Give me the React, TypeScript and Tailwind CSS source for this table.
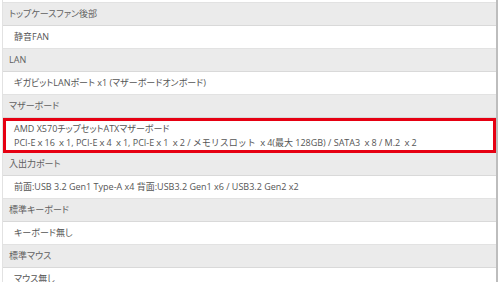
type Spec = { label: string; lines: string[]; highlight?: boolean };

const specs: Spec[] = [
  { label: 'トップケースファン後部', lines: ['静音FAN'] },
  { label: 'LAN', lines: ['ギガビットLANポート x1 (マザーボードオンボード)'] },
  {
    label: 'マザーボード',
    lines: [
      'AMD X570チップセットATXマザーボード',
      'PCI-Eｘ16 ｘ1, PCI-Eｘ4 ｘ1, PCI-Eｘ1 ｘ2 / メモリスロット ｘ4(最大 128GB) / SATA3 ｘ8 / M.2 ｘ2',
    ],
    highlight: true,
  },
  { label: '入出力ポート', lines: ['前面:USB 3.2 Gen1 Type-A x4 背面:USB3.2 Gen1 x6 / USB3.2 Gen2 x2'] },
  { label: '標準キーボード', lines: ['キーボード無し'] },
  { label: '標準マウス', lines: ['マウス無し'] },
];

function SpecRow({ spec }: { spec: Spec }) {
  return (
    <>
      <div className="h-[23px] flex items-center pl-[6px] bg-[#ebebeb] border-b border-[#d9d9d9] text-[9px] text-[#606060]">
        {spec.label}
      </div>
      {spec.highlight ? (
        <div className="h-[35px] border-[3px] border-[#e60012] flex flex-col justify-center pl-[8px] text-[9px] leading-[14px] text-[#555] bg-white">
          <div className="whitespace-nowrap">{spec.lines[0]}</div>
          {/* full-width ｘ keeps its cell here */}
          <div className="whitespace-nowrap [font-feature-settings:normal]">{spec.lines[1]}</div>
        </div>
      ) : (
        <div className="h-[23px] flex items-center pl-[11px] bg-white border-b border-[#e2e2e2] text-[9px] text-[#555]">
          {spec.lines[0]}
        </div>
      )}
    </>
  );
}

export default function App() {
  return (
    <div className="w-[500px] h-[282px] overflow-hidden bg-white pl-[2px] pr-[2px] font-['Open_Sans','Noto_Sans_CJK_JP',sans-serif] [font-feature-settings:'palt']">
      <div className="border-l border-r-2 border-[#e2e2e2] border-r-[#bdbdbd]">
        <div className="h-[3px] bg-white border-b border-[#e2e2e2]" />
        {specs.map((s) => (
          <SpecRow key={s.label} spec={s} />
        ))}
      </div>
    </div>
  );
}
